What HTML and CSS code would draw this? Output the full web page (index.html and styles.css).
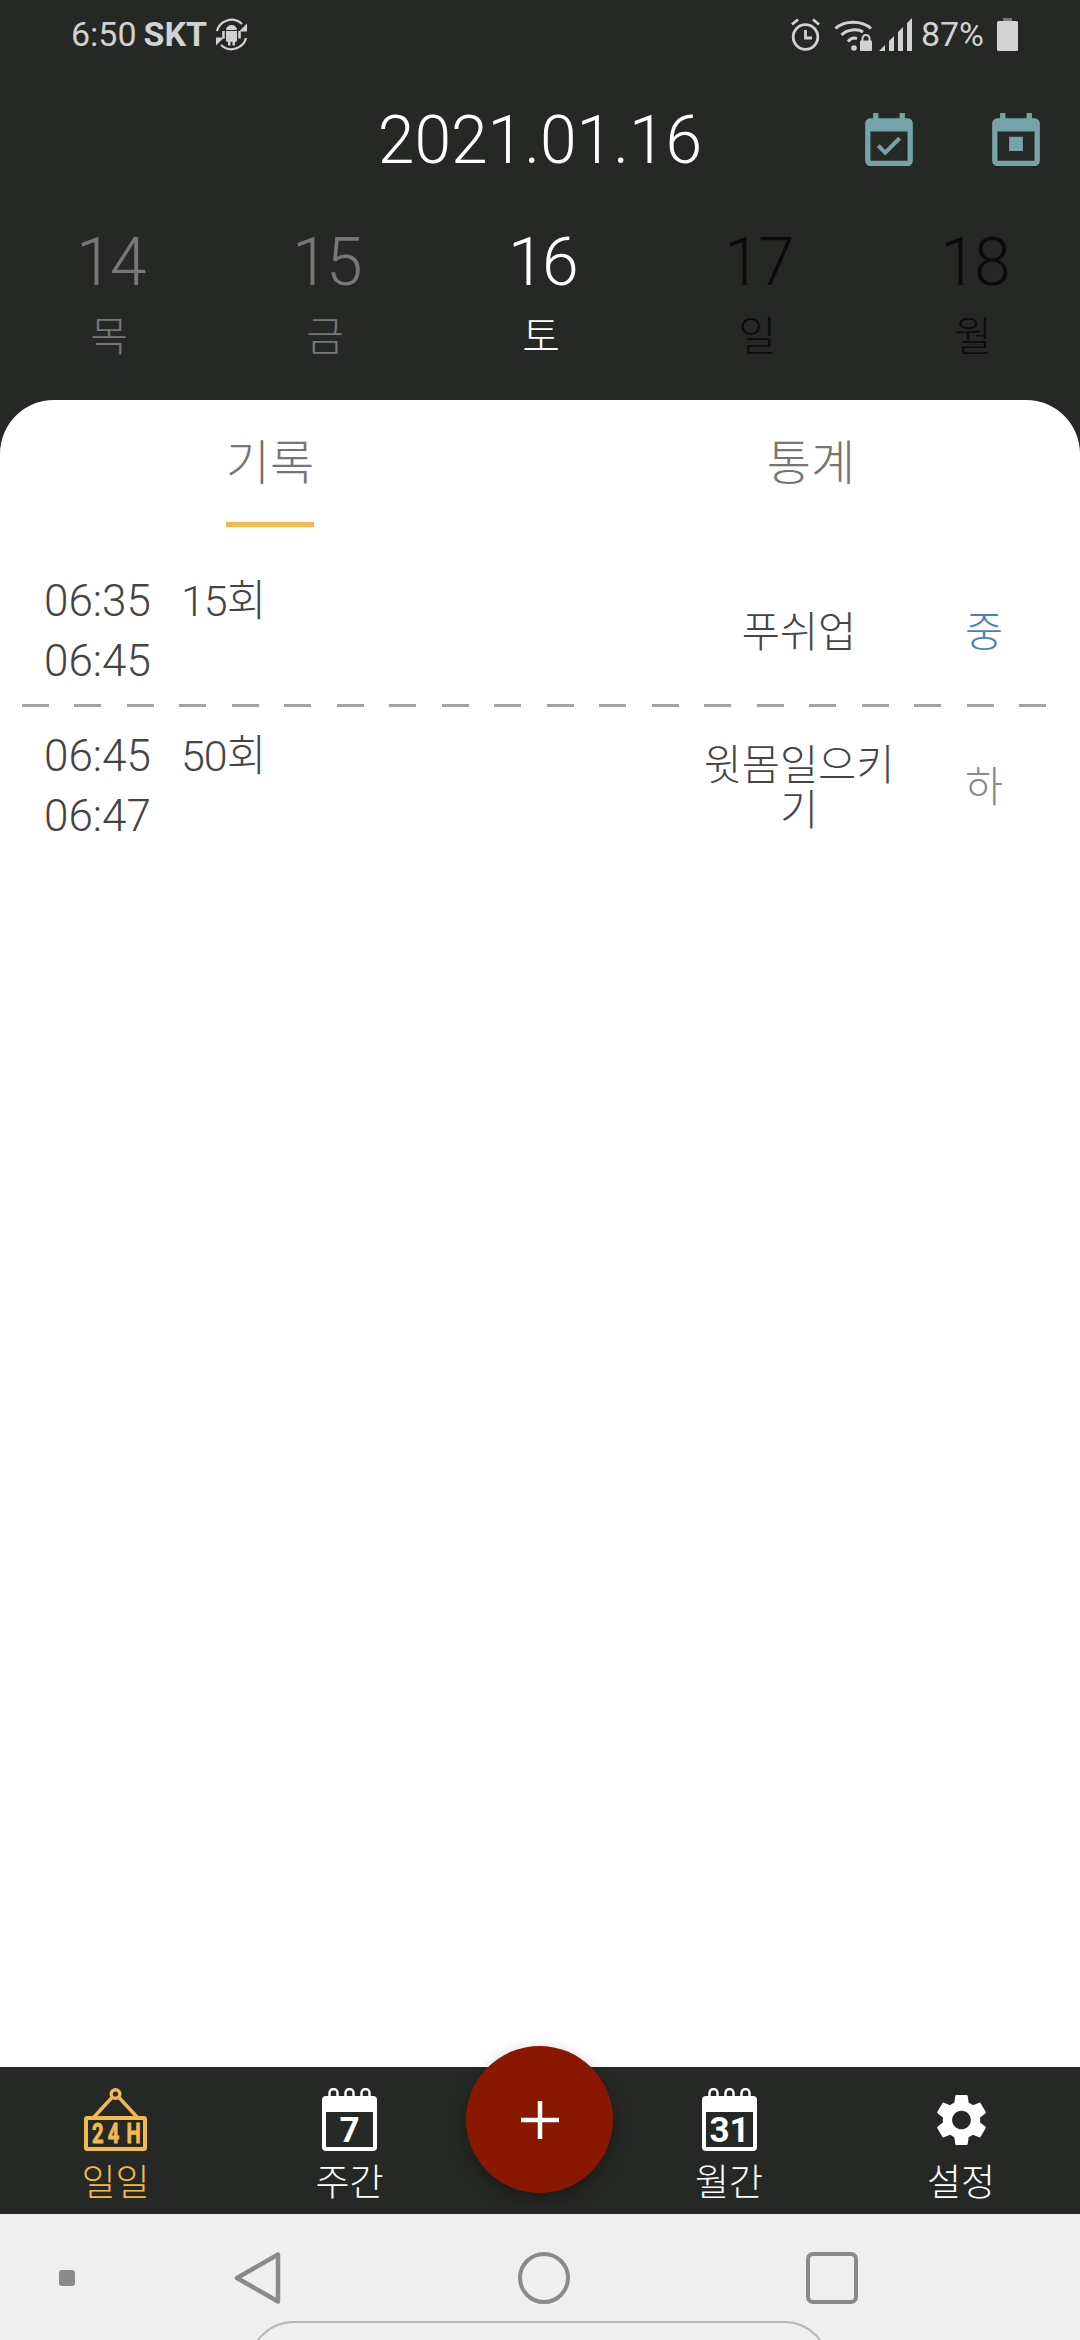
FILE: index.html
```html
<!DOCTYPE html>
<html lang="ko">
<head>
<meta charset="utf-8">
<title>일일 기록</title>
<link rel="stylesheet" href="styles.css">
</head>
<body>
<div class="screen">
  <header class="top">
    <div class="status">
      <div class="status-left">
        <span class="clock">6:50</span>
        <span class="carrier">SKT</span>
        <svg class="i-sync" viewBox="0 0 33 33" width="33" height="33">
          <path class="st" d="M2 13C4 4 17-3 27 6" fill="none" stroke-width="2.200"/>
          <path class="fl" d="M32 5.500V13.500h-8z"/>
          <path class="st" d="M31 20C29 29 16 36 6 27" fill="none" stroke-width="2.200"/>
          <path class="fl" d="M1 27.500V19.500h8z"/>
          <path class="fl" d="M11 12a5.500 5 0 0 1 11 0zM11 13h11v9.500a1.200 1.200 0 0 1-1.200 1.200h-.8v3.800h-2.500v-3.800h-2v3.800h-2.500v-3.800h-.8a1.200 1.200 0 0 1-1.200-1.200zM7.200 13h2.600v7.500H7.200zM23.200 13h2.600v7.500h-2.600z"/>
        </svg>
      </div>
      <div class="status-right">
        <svg class="i-alarm" viewBox="0 0 29 33" width="29" height="33">
          <circle class="st" cx="14.500" cy="19" r="12.300" fill="none" stroke-width="2.800"/>
          <path class="st" d="M14.500 12v8h6.500" fill="none" stroke-width="2.800"/>
          <path class="st" d="M1 6.500L7 1.500M28 6.500L22 1.500" fill="none" stroke-width="2.800"/>
        </svg>
        <svg class="i-wifi" viewBox="0 0 38 33" width="38" height="33">
          <path class="st" d="M1.500 10.500C10 2 28 2 37 10.500M7.500 17C13 11 24 10.500 29 14M14 23.500C16.500 20.500 20 19.500 23 20.500" fill="none" stroke-width="3"/>
          <circle class="fl" cx="20" cy="30" r="2.800"/>
          <path class="st" d="M28.500 23v-2.500a3.500 3.500 0 0 1 7 0V23" fill="none" stroke-width="2"/>
          <rect class="fl" x="26" y="22.500" width="12" height="10.500" rx="1"/>
        </svg>
        <svg class="i-signal" viewBox="0 0 33 33" width="33" height="33">
          <path class="fl" d="M0 33L6 27V33zM10 33V23L15 18V33zM19 33V14L24 9V33zM28 33V5L33 0V33z"/>
        </svg>
        <span class="pct">87%</span>
        <svg class="i-batt" viewBox="0 0 21 33" width="21" height="33">
          <rect x="6" y="0" width="9" height="4" fill="#777"/>
          <rect class="fl" x="0" y="3" width="21" height="30" rx="1.500"/>
        </svg>
      </div>
    </div>

    <div class="title-row">
      <div></div>
      <h1 class="date">2021.01.16</h1>
      <div class="title-actions">
        <svg class="i-cal" viewBox="3 1 18 20" width="48" height="53">
          <path d="M16.530 11.060L15.470 10l-4.880 4.880-2.120-2.120-1.060 1.060L10.590 17l5.940-5.940zM19 3h-1V1h-2v2H8V1H6v2H5c-1.110 0-1.990.900-1.990 2L3 19c0 1.100.890 2 2 2h14c1.100 0 2-.900 2-2V5c0-1.100-.900-2-2-2zm0 16H5V8h14v11z"/>
        </svg>
        <svg class="i-cal" viewBox="3 1 18 20" width="48" height="53">
          <path d="M9.400 10h5.200v5.300H9.400zM19 3h-1V1h-2v2H8V1H6v2H5c-1.110 0-1.990.900-1.990 2L3 19c0 1.100.890 2 2 2h14c1.100 0 2-.900 2-2V5c0-1.100-.900-2-2-2zm0 16H5V8h14v11z"/>
        </svg>
      </div>
    </div>

    <div class="days">
      <div class="day past"><span class="num">14</span><span class="dow">목</span></div>
      <div class="day past"><span class="num">15</span><span class="dow">금</span></div>
      <div class="day now"><span class="num">16</span><span class="dow">토</span></div>
      <div class="day next"><span class="num">17</span><span class="dow">일</span></div>
      <div class="day next"><span class="num">18</span><span class="dow">월</span></div>
    </div>
  </header>

  <main class="card">
    <div class="tabs">
      <div class="tab active"><span class="tab-label">기록</span></div>
      <div class="tab"><span class="tab-label">통계</span></div>
    </div>

    <section class="rows">
      <article class="row">
        <div class="times"><span>06:35</span><span>06:45</span></div>
        <div class="count">15회</div>
        <div class="name">푸쉬업</div>
        <div class="level mid">중</div>
      </article>
      <div class="divider"></div>
      <article class="row">
        <div class="times"><span>06:45</span><span>06:47</span></div>
        <div class="count">50회</div>
        <div class="name">윗몸일으키기</div>
        <div class="level low">하</div>
      </article>
    </section>
  </main>

  <nav class="nav">
    <div class="nav-item active">
      <svg viewBox="0 0 63 63" width="63" height="63">
        <circle cx="31.500" cy="6" r="4.300" fill="none" stroke="currentColor" stroke-width="3.400"/>
        <path d="M28 9.500L10 29M35 9.500L53 29" fill="none" stroke="currentColor" stroke-width="3.400"/>
        <rect x="2" y="30" width="59" height="31" rx="1" fill="none" stroke="currentColor" stroke-width="4"/>
        <text class="sign" transform="translate(8 54.500) scale(.72 1)" x="0 22 48">24H</text>
      </svg>
      <span>일일</span>
    </div>
    <div class="nav-item">
      <svg viewBox="0 0 55 63" width="55" height="63">
        <path d="M7.500 9V5a4 4 0 0 1 8 0v4M23.500 9V5a4 4 0 0 1 8 0v4M39.500 9V5a4 4 0 0 1 8 0v4" fill="none" stroke="currentColor" stroke-width="2.400"/>
        <rect x="0" y="8" width="55" height="55" rx="4" fill="currentColor"/>
        <rect x="4" y="24" width="47" height="35" fill="#262825"/>
        <text class="cal-num" x="27.500" y="54" text-anchor="middle">7</text>
      </svg>
      <span>주간</span>
    </div>
    <div class="nav-gap"></div>
    <div class="nav-item">
      <svg viewBox="0 0 55 63" width="55" height="63">
        <path d="M7.500 9V5a4 4 0 0 1 8 0v4M23.500 9V5a4 4 0 0 1 8 0v4M39.500 9V5a4 4 0 0 1 8 0v4" fill="none" stroke="currentColor" stroke-width="2.400"/>
        <rect x="0" y="8" width="55" height="55" rx="4" fill="currentColor"/>
        <rect x="4" y="24" width="47" height="35" fill="#262825"/>
        <text class="cal-num" x="27.500" y="54" text-anchor="middle">31</text>
      </svg>
      <span>월간</span>
    </div>
    <div class="nav-item">
      <div class="gear-box">
        <svg viewBox="2.600 2 18.800 20" width="49" height="52">
          <path fill="currentColor" d="M19.140 12.940c.040-.300.060-.610.060-.940 0-.320-.020-.640-.070-.940l2.030-1.580c.180-.140.230-.410.120-.610l-1.920-3.320c-.120-.220-.370-.290-.590-.220l-2.390.960c-.500-.380-1.030-.700-1.620-.940l-.360-2.540c-.040-.240-.240-.410-.480-.410h-3.840c-.240 0-.430.170-.470.410l-.360 2.540c-.590.240-1.130.570-1.620.940l-2.390-.960c-.220-.080-.470 0-.590.220L2.740 8.870c-.120.210-.080.470.120.610l2.030 1.580c-.050.300-.090.630-.090.940s.020.640.070.940l-2.030 1.580c-.180.140-.230.410-.120.610l1.920 3.320c.120.220.370.290.590.220l2.390-.960c.500.380 1.030.700 1.620.940l.360 2.540c.050.240.240.410.480.410h3.840c.240 0 .440-.170.470-.410l.360-2.540c.590-.240 1.130-.560 1.620-.940l2.390.960c.220.080.470 0 .590-.220l1.920-3.320c.120-.220.070-.470-.120-.610l-2.010-1.580zM12 15.600c-1.980 0-3.600-1.620-3.600-3.600s1.620-3.600 3.600-3.600 3.600 1.620 3.600 3.600-1.620 3.600-3.600 3.600z"/>
        </svg>
      </div>
      <span>설정</span>
    </div>
    <button class="fab" type="button" aria-label="추가">
      <svg viewBox="0 0 38 38" width="38" height="38"><path d="M0 19h38M19 0v38" stroke="#fff" stroke-width="4.500" fill="none"/></svg>
    </button>
  </nav>

  <footer class="sysbar">
    <div class="sys-icons">
      <span class="sys-dot"></span>
      <svg class="sys-back" viewBox="0 0 47 52" width="47" height="52"><path d="M3 26L44 2.500V49.500Z" fill="none" stroke="#8a8a8a" stroke-width="4.500" stroke-linejoin="round"/></svg>
      <span class="sys-home"></span>
      <span class="sys-recent"></span>
    </div>
    <div class="sys-pill"></div>
  </footer>
</div>
</body>
</html>
```

FILE: styles.css
```css
* { box-sizing: border-box; }
html, body { margin: 0; padding: 0; }
body {
  width: 1080px;
  height: 2340px;
  overflow: hidden;
  background: #262825;
  font-family: Roboto, "Noto Sans CJK KR", sans-serif;
}
.screen {
  width: 1080px;
  height: 2340px;
  display: flex;
  flex-direction: column;
}

/* header */
.top { height: 400px; flex: none; display: flex; flex-direction: column; }
.status {
  height: 69px;
  padding: 18px 62px 0 71px;
  display: flex;
  justify-content: space-between;
  align-items: flex-start;
  color: #d2d2d2;
  font-size: 34px;
  line-height: 33px;
}
.status svg { display: block; }
.fl { fill: #d2d2d2; }
.st { stroke: #d2d2d2; }
.status-left, .status-right { display: flex; align-items: center; height: 33px; }
.carrier { font-weight: 700; margin-left: 7px; }
.i-sync { margin-left: 8px; }
.i-wifi { margin-left: 14px; }
.i-signal { margin-left: 7px; }
.pct { margin-left: 9px; }
.i-batt { margin-left: 13px; }

.title-row {
  display: grid;
  grid-template-columns: 1fr auto 1fr;
  align-items: center;
  height: 53px;
  margin-top: 42px;
}
.date {
  margin: 0;
  padding-top: 3px;
  font-size: 66px;
  line-height: 53px;
  font-weight: 300;
  color: #fff;
}
.title-actions {
  display: flex;
  justify-content: flex-end;
  gap: 79px;
  padding-right: 40px;
}
.i-cal { display: block; fill: #74a3a8; }

.days { display: grid; grid-template-columns: repeat(5, 216px); margin-top: 61px; padding-left: 2px; }
.day { display: flex; flex-direction: column; align-items: center; }
.num { font-size: 66px; line-height: 76px; font-weight: 350; letter-spacing: -2.500px; }
.dow { font-size: 41px; line-height: 50px; font-weight: 300; margin-top: 7px; margin-left: -2px; font-family: "Noto Sans CJK KR", sans-serif; }
.past { color: #777; }
.now { color: #fff; }
.next { color: #0b0b0b; }

/* card */
.card {
  flex: 1;
  background: #fff;
  border-radius: 54px 54px 0 0;
  display: flex;
  flex-direction: column;
  font-family: "Noto Sans CJK KR", sans-serif;
}
.tabs { display: grid; grid-template-columns: 540px 540px; height: 127px; }
.tab { display: flex; justify-content: center; color: #757575; font-size: 48px; }
.tab-label { height: 127px; padding-top: 27px; line-height: 64px; border-bottom: 5px solid transparent; font-weight: 300; }
.tab.active .tab-label { border-bottom-color: #f2b950; }
.tab:nth-child(2) .tab-label { margin-left: 2px; }

.rows { padding-top: 31px; }
.row {
  display: flex;
  align-items: center;
  padding: 13px 0 13px 44px;
  color: #444;
  font-size: 42px;
}
.divider + .row { padding-top: 19px; padding-bottom: 19px; }
.times {
  display: flex;
  flex-direction: column;
  width: 137px;
  font-family: Roboto, sans-serif;
  font-weight: 300;
  font-size: 44px;
  line-height: 60px;
}
.count {
  align-self: flex-start;
  width: 518px;
  font-family: Roboto, "Noto Sans CJK KR", sans-serif;
  font-weight: 300;
  font-size: 43px;
  line-height: 60px;
  letter-spacing: -1px;
}
.name {
  width: 200px;
  text-align: center;
  font-size: 41.500px;
  line-height: 45px;
  font-weight: 300;
  margin-top: -3px;
}
.level {
  width: 170px;
  text-align: center;
  font-size: 41.500px;
  line-height: 45px;
  font-weight: 300;
  margin-top: -3px;
}
.mid { color: #4a7fc4; }
.low { color: #8a8a8a; }
.divider {
  height: 3px;
  margin: 0 34px 0 22px;
  background: repeating-linear-gradient(90deg, #a3a3a3 0 27px, transparent 27px 52.5px);
}

/* bottom nav */
.nav {
  position: relative;
  flex: none;
  height: 147px;
  display: grid;
  grid-template-columns: 231px 237px 144px 234px 230px;
  color: #fff;
  background: #262825;
}
.nav-item {
  display: flex;
  flex-direction: column;
  align-items: center;
  padding-top: 21px;
  font-family: "Noto Sans CJK KR", sans-serif;
  font-size: 37px;
  font-weight: 300;
}
.nav-item svg { display: block; }
.nav-item span { line-height: 46px; margin-top: 6px; }
.nav-item.active { color: #f2b950; }
.gear-box { height: 63px; padding-top: 6px; }
.sign { font-family: Roboto, sans-serif; font-weight: 700; font-size: 28px; fill: currentColor; stroke: currentColor; stroke-width: .9px; }
.cal-num { font-family: Roboto, sans-serif; font-weight: 700; font-size: 35px; fill: currentColor; }
.fab {
  position: absolute;
  left: 466px;
  top: -21px;
  width: 147px;
  height: 147px;
  border: 0;
  padding: 0;
  border-radius: 50%;
  background: #8a1800;
  box-shadow: 0 6px 16px rgba(0, 0, 0, .3);
  display: flex;
  align-items: center;
  justify-content: center;
}
.fab svg { display: block; }

/* system bar */
.sysbar {
  flex: none;
  height: 126px;
  overflow: hidden;
  background: #efefef;
  padding-top: 38px;
}
.sys-icons { height: 52px; display: flex; align-items: center; padding-left: 59px; }
.sys-dot { width: 16px; height: 16px; border-radius: 3px; background: #8a8a8a; }
.sys-back { display: block; margin-left: 159px; }
.sys-home { width: 52px; height: 52px; margin-left: 237px; border: 4.500px solid #8a8a8a; border-radius: 50%; }
.sys-recent { width: 52px; height: 52px; margin-left: 236px; border: 4.500px solid #8a8a8a; border-radius: 7px; }
.sys-pill {
  width: 582px;
  height: 100px;
  margin: 17px 0 0 248px;
  border: 2px solid #b8b8b8;
  border-radius: 46px;
}
```
